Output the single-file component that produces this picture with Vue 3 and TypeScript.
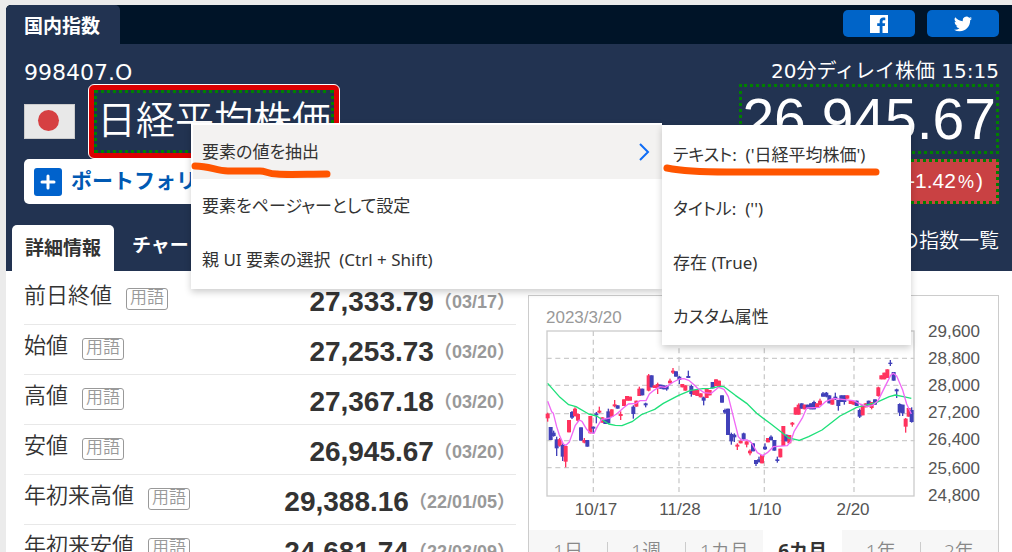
<script setup lang="ts">
interface Quote { label: string; value: string; date: string }
type Candle = [x: number, up: 0 | 1, top: number, bottom: number, high?: number, low?: number]

const quotes: Quote[] = [
  { label: '前日終値', value: '27,333.79', date: '03/17' },
  { label: '始値', value: '27,253.73', date: '03/20' },
  { label: '高値', value: '27,367.18', date: '03/20' },
  { label: '安値', value: '26,945.67', date: '03/20' },
  { label: '年初来高値', value: '29,388.16', date: '22/01/05' },
  { label: '年初来安値', value: '24,681.74', date: '22/03/09' },
]
const periods = ['1日', '1週', '1カ月', '6カ月', '1年', '2年']
const menuItems = ['要素の値を抽出', '要素をページャーとして設定', '親 UI 要素の選択  (Ctrl + Shift)']
const subItems = ["テキスト:  ('日経平均株価')", "タイトル:  ('')", '存在 (True)', 'カスタム属性']

const yLabels = [
  { text: '29,600', y: 41 }, { text: '28,800', y: 68 }, { text: '28,000', y: 95 },
  { text: '27,200', y: 122 }, { text: '26,400', y: 149 }, { text: '25,600', y: 178 }, { text: '24,800', y: 205 },
]
const xLabels = [
  { text: '10/17', x: 67 }, { text: '11/28', x: 151 }, { text: '1/10', x: 236 }, { text: '2/20', x: 324 },
]
const gridY = [235, 316, 401, 482, 563]
const gridX = [220, 477, 733, 1002]

const candles: Candle[] = [
  [83, 1, 401, 415, 398, 425], [92, 0, 441, 480], [101, 0, 458, 468, 452, 470], [110, 0, 478, 505, 470, 528],
  [119, 1, 478, 497, 474, 500], [128, 0, 495, 530, 490, 543], [137, 1, 498, 545, 498, 562], [147, 1, 420, 457],
  [156, 0, 396, 413, 393, 417], [165, 1, 386, 408, 382, 410], [174, 1, 402, 422, 400, 425], [183, 0, 442, 482],
  [193, 1, 480, 488, 474, 490], [202, 0, 480, 500], [211, 1, 408, 460], [220, 0, 440, 446, 440, 462],
  [229, 0, 400, 406, 396, 430], [238, 1, 392, 398, 380, 400], [247, 1, 412, 428], [256, 0, 418, 432],
  [265, 0, 394, 430, 386, 432], [275, 1, 388, 410], [284, 1, 373, 379, 360, 382], [293, 0, 376, 386],
  [302, 1, 402, 408, 394, 420], [312, 1, 358, 378], [321, 1, 348, 362], [330, 1, 350, 362],
  [340, 0, 380, 402, 376, 416], [349, 1, 362, 380], [358, 1, 326, 348, 320, 348], [367, 0, 326, 346],
  [377, 0, 370, 376, 368, 382], [386, 1, 286, 332, 282, 334], [395, 0, 286, 322], [404, 1, 316, 324],
  [413, 1, 312, 324, 308, 342], [422, 0, 314, 326], [431, 0, 316, 328], [440, 0, 318, 328, 316, 332],
  [450, 1, 302, 310, 296, 310], [459, 1, 272, 278, 264, 282], [468, 0, 274, 290], [478, 0, 290, 300, 288, 312],
  [487, 1, 312, 322], [496, 1, 316, 332], [505, 0, 288, 294, 272, 294], [514, 0, 318, 342, 314, 350],
  [523, 1, 330, 345], [532, 1, 330, 348], [542, 1, 340, 352], [551, 0, 352, 362, 350, 376],
  [560, 1, 326, 354], [569, 1, 330, 346], [578, 0, 306, 325], [588, 1, 298, 318], [597, 1, 302, 320],
  [606, 0, 346, 368], [615, 0, 390, 398, 386, 402], [624, 0, 386, 465], [634, 0, 462, 484, 458, 494],
  [643, 0, 464, 472, 460, 486], [652, 1, 494, 500, 490, 510], [662, 1, 482, 490], [671, 0, 460, 478, 458, 482],
  [680, 1, 484, 494, 484, 502], [690, 1, 512, 520, 508, 526], [699, 0, 490, 514], [708, 0, 540, 552, 540, 558],
  [717, 0, 538, 546, 530, 548], [726, 1, 525, 550], [735, 0, 500, 508, 490, 510], [744, 1, 474, 487],
  [753, 0, 470, 480, 466, 482], [763, 0, 480, 512], [772, 0, 538, 543, 530, 548], [781, 1, 506, 532],
  [790, 1, 438, 498], [799, 0, 464, 484], [808, 1, 465, 490], [817, 1, 428, 434, 426, 440],
  [827, 1, 382, 404], [836, 1, 374, 404, 370, 404], [845, 0, 370, 386], [854, 1, 374, 388], [863, 0, 374, 386],
  [873, 0, 370, 388], [882, 0, 366, 388, 362, 388], [891, 1, 370, 382], [900, 1, 362, 376, 356, 376],
  [909, 0, 340, 350, 336, 350], [919, 0, 338, 350, 336, 352], [928, 0, 346, 370], [937, 1, 358, 374],
  [946, 0, 350, 358, 338, 360], [955, 0, 360, 378, 360, 392], [964, 0, 346, 366], [973, 0, 346, 366, 346, 374],
  [982, 1, 346, 356], [992, 1, 360, 372], [1001, 1, 364, 374], [1010, 0, 362, 378], [1019, 0, 390, 410, 386, 414],
  [1028, 1, 376, 406], [1037, 1, 370, 382], [1046, 0, 362, 376], [1055, 1, 366, 384, 366, 388],
  [1065, 0, 358, 374], [1075, 1, 322, 348, 320, 350], [1084, 1, 286, 298], [1093, 1, 278, 298], [1102, 1, 268, 294],
  [1111, 0, 248, 252, 240, 258], [1121, 0, 276, 302], [1130, 0, 328, 334, 326, 354], [1139, 0, 372, 398, 370, 408],
  [1148, 0, 374, 400, 374, 408], [1157, 1, 416, 440, 414, 458], [1166, 1, 384, 410], [1175, 0, 390, 426, 382, 428],
]

const shortAverage = '83,364 95,395 100,400 110,440 118,465 130,492 138,496 148,486 158,458 166,436 178,420 186,424 200,448 210,458 222,460 232,440 245,418 270,414 290,402 310,384 325,372 348,370 360,362 378,362 388,342 400,332 420,320 436,322 460,306 478,297 492,296 508,302 522,314 532,324 552,338 574,340 596,322 612,328 625,350 640,410 655,470 664,480 682,480 694,488 712,518 728,527 742,518 760,500 802,497 812,485 822,455 848,412 860,384 898,382 918,364 940,355 1000,362 1020,372 1042,380 1058,376 1074,362 1098,314 1112,286 1120,280 1130,288 1148,330 1160,372 1174,402'
const longAverage = '83,310 120,352 146,374 168,380 206,402 230,408 266,432 286,436 306,437 338,424 366,403 384,396 404,388 430,370 476,346 512,331 548,326 570,325 600,319 612,320 646,346 680,370 710,400 750,430 776,450 806,474 838,481 866,470 906,450 960,408 1010,382 1068,368 1108,350 1126,345 1150,350 1174,355'
</script>

<template>
  <div class="page">
    <header>
      <div class="topbar">
        <a class="category" href="#">国内指数</a>
        <div class="social">
          <button type="button" aria-label="Facebook">
            <svg width="18" height="18" viewBox="0 0 18 18"><path fill="#fff" d="M0 0h18v18h-5.500v-7h2.300l.4-2.800h-2.700V6.600c0-.9.4-1.300 1.400-1.300h1.400V2.700c-.4-.1-1.100-.2-2-.2-2.200 0-3.600 1.300-3.600 3.600v2.100H7.200V11h2.500v7H0z" /></svg>
          </button>
          <button type="button" aria-label="Twitter">
            <svg width="18" height="16" viewBox="0 1.500 24 21"><path fill="#fff" d="M23.950 4.570a10 10 0 0 1-2.820.78 4.960 4.960 0 0 0 2.160-2.730c-.95.560-2 .970-3.120 1.190a4.920 4.920 0 0 0-8.390 4.480C7.690 8.100 4.070 6.130 1.640 3.160a4.920 4.920 0 0 0 1.520 6.570 4.900 4.900 0 0 1-2.230-.61v.06a4.920 4.920 0 0 0 3.950 4.830 5 5 0 0 1-2.210.08 4.940 4.940 0 0 0 4.600 3.420A9.870 9.870 0 0 1 0 19.540a14 14 0 0 0 7.550 2.210c9.050 0 14-7.500 14-13.980 0-.21 0-.42-.02-.63a9.940 9.940 0 0 0 2.460-2.550z" /></svg>
          </button>
        </div>
      </div>
      <div class="summary">
        <div class="identity">
          <p class="code">998407.O</p>
          <div class="name-row">
            <span class="flag"><i></i></span>
            <h1><span>日経平均株価</span></h1>
          </div>
          <button class="portfolio" type="button">
            <svg width="28" height="28" viewBox="0 0 28 28"><rect width="28" height="28" rx="3" fill="#0062cc" /><path d="M14 8v12M8 14h12" stroke="#fff" stroke-width="3" stroke-linecap="round" /></svg>
            <span>ポートフォリオに追加</span>
          </button>
          <nav class="tabs">
            <a class="active" href="#">詳細情報</a>
            <a href="#">チャート</a>
          </nav>
        </div>
        <div class="price-side">
          <p class="delay">20分ディレイ株価 15:15</p>
          <p class="price">26,945.67</p>
          <p class="change">-388.12 (-1.42<small>%</small>)</p>
          <a class="more" href="#">その他の指数一覧</a>
        </div>
      </div>
    </header>

    <main>
      <dl class="quotes">
        <div v-for="q in quotes" :key="q.label" class="quote">
          <dt>{{ q.label }}<a class="term" href="#">用語</a></dt>
          <dd>{{ q.value }}<span class="date">（{{ q.date }}）</span></dd>
        </div>
      </dl>
      <section class="panel">
        <svg class="chart" viewBox="0 0 469 234" role="img" aria-label="日経平均株価 6カ月">
          <text x="17" y="27" class="muted">2023/3/20</text>
          <g transform="translate(-9 -16) scale(.33333)">
            <g stroke="#ccc" stroke-width="4" stroke-dasharray="15 11">
              <line v-for="y in gridY" :key="'h' + y" x1="80" x2="1183" :y1="y" :y2="y" />
              <line v-for="x in gridX" :key="'v' + x" y1="153" y2="648" :x1="x" :x2="x" />
            </g>
            <rect x="81" y="153" width="1101" height="495" fill="none" stroke="#ccc" stroke-width="4" />
            <g v-for="c in candles" :key="c[0]" :fill="c[1] ? '#ff335f' : '#4141b9'">
              <rect :x="c[0] - 6" :y="c[2]" width="12" :height="c[3] - c[2]" />
              <rect :x="c[0] - 2" :y="c[4] ?? c[2]" width="4" :height="(c[5] ?? c[3]) - (c[4] ?? c[2])" />
            </g>
            <polyline :points="longAverage" fill="none" stroke="#1fe07a" stroke-width="4" stroke-linejoin="round" />
            <polyline :points="shortAverage" fill="none" stroke="#f069f5" stroke-width="4" stroke-linejoin="round" />
          </g>
          <text v-for="l in yLabels" :key="l.text" x="399" :y="l.y">{{ l.text }}</text>
          <text v-for="l in xLabels" :key="l.text" :x="l.x" y="219" text-anchor="middle">{{ l.text }}</text>
        </svg>
        <nav class="periods">
          <button v-for="(p, i) in periods" :key="p" type="button" :class="{ active: i === 3, divided: i !== 0 && i !== 3 && i !== 4 }">{{ p }}</button>
        </nav>
      </section>
    </main>

    <div class="menu" role="menu">
      <button v-for="(m, i) in menuItems" :key="m" type="button" role="menuitem" :class="{ hover: i === 0 }">
        {{ m }}
        <svg v-if="i === 0" width="12" height="18" viewBox="0 0 12 18"><path d="M2 1l8 8-8 8" fill="none" stroke="#0f6cf5" stroke-width="2" /></svg>
      </button>
      <svg class="mark first" width="146" height="22" viewBox="0 0 146 22"><path d="M7 6C22 6 28 11 40 11H72C78 11 80 14 89 14C100 15 120 14 139 14" /></svg>
      <div class="menu submenu" role="menu">
        <button v-for="s in subItems" :key="s" type="button" role="menuitem">{{ s }}</button>
        <svg class="mark second" width="222" height="16" viewBox="0 0 222 16"><path d="M5 5C25 9 45 9 65 9H214" /></svg>
      </div>
    </div>
  </div>
</template>

<style>
body { overflow: hidden; background: #ebebeb; }
</style>

<style scoped>
* { box-sizing: border-box; }
.page {
  position: relative;
  height: 100vh;
  padding: 5px 0 0 6px;
  overflow: hidden;
  font-family: "Noto Sans", "Noto Sans CJK JP", sans-serif;
  font-size: 20px;
  line-height: 24px;
  color: #333;
}
p, h1, dl, dd { margin: 0; }
a { color: inherit; text-decoration: none; }
button { padding: 0; border: 0; font: inherit; color: inherit; background: none; cursor: pointer; }
svg { display: block; }
header { background: #223351; color: #fff; border-radius: 5px 0 0 0; overflow: hidden; }
.topbar { display: flex; justify-content: space-between; background: #001428; height: 39px; }
.category { padding: 8px 20px 0 18px; background: #223351; border-radius: 5px 5px 0 0; font-weight: 700; font-family: "Noto Sans CJK JP", sans-serif; font-size: 19px; }
.social { display: flex; gap: 12px; padding: 5px 13px 7px 0; }
.social button { display: flex; align-items: center; justify-content: center; width: 72px; border-radius: 5px; background: #0064c8; }
.summary { display: flex; justify-content: space-between; }
.identity { padding: 18px 0 0 18px; }
.code { font-family: "DejaVu Sans", sans-serif; font-size: 22px; line-height: 22px; }
.name-row { display: flex; align-items: center; gap: 13px; }
.flag { display: flex; align-items: center; justify-content: center; width: 51px; height: 35px; background: #e8e8e8; border: 1px solid #ccc; }
.flag i { width: 21px; height: 21px; margin: 0 2px 2px 0; border-radius: 50%; background: #d64042; }
h1 { border: 1px solid #fff; border-radius: 6px; background: #dc0000; padding: 5px; font-weight: 350; font-size: 39px; line-height: 49px; font-family: "Noto Sans CJK JP", sans-serif; }
h1 span { display: block; padding-bottom: 8px; border: 3px dotted #008000; background: #223351; white-space: nowrap; }
.portfolio { display: flex; align-items: center; gap: 9px; height: 45px; padding: 0 12px 0 10px; border-radius: 5px; background: #fff; color: #0059b3; font-size: 21px; font-weight: 700; white-space: nowrap; }
.portfolio span { padding-bottom: 4px; }
.tabs { display: flex; margin: 21px 0 0 -12px; font-weight: 700; font-size: 19px; }
.tabs a { padding: 8px 18px 14px; }
.tabs .active { padding: 11px 13px; background: #fff; color: #333; border-radius: 5px 5px 0 0; }
.price-side { display: flex; flex-direction: column; align-items: flex-end; padding: 15px 13px 0 0; white-space: nowrap; }
.delay { font-family: "DejaVu Sans", "Noto Sans CJK JP", sans-serif; }
.price { margin-top: 1px; border: 3px dotted #008000; font-family: "Liberation Sans", sans-serif; font-size: 57px; line-height: 64px; }
.change { margin-top: 5px; padding: 0 13px; border: 3px dotted #008000; background: #c94143; font-family: "Liberation Sans", sans-serif; font-size: 21px; line-height: 38px; }
.change small { font-size: 18px; margin: 0 2px; }
.more { margin-top: 25px; font-weight: 350; }
main { display: flex; gap: 12px; padding: 4px 13px 0 18px; background: #fff; }
.quotes { flex: 492 1 0; }
.quote { display: flex; justify-content: space-between; height: 50px; padding-right: 1px; border-bottom: 1px solid #e8e8e8; font-family: "Liberation Sans", "Noto Sans CJK JP", sans-serif; }
dt { display: flex; align-items: flex-start; padding-top: 9px; font-size: 22px; font-weight: 350; white-space: nowrap; }
.term { margin: 4px 0 0 14px; padding: 0 3px; border: 1px solid #999; border-radius: 3px; color: #999; font-size: 17px; line-height: 17px; height: 22px; }
dd { padding-top: 11px; font-weight: 700; font-size: 28px; line-height: 32px; white-space: nowrap; }
.date { color: #999; font-size: 18px; line-height: 20px; vertical-align: 3px; }
.panel { flex: 469 1 0; margin-top: 20px; border: 1px solid #ccc; border-bottom: 0; }
.chart { width: 100%; font-family: "Liberation Sans", sans-serif; font-size: 17px; fill: #555; }
.muted { fill: #999; }
.periods { display: grid; grid-template-columns: repeat(6, 1fr); background: #f7f7f7; color: #888; font-size: 19px; font-weight: 350; }
.periods button { position: relative; height: 42px; }
.periods .divided::before { content: ""; position: absolute; left: 0; top: 12px; width: 1px; height: 20px; background: #ccc; }
.periods .active { background: #fff; color: #333; font-weight: 700; }
.menu { position: absolute; left: 191px; top: 123px; width: 471px; padding: 2px 0 2px 2px; background: #fff; color: #333; box-shadow: 0 3px 7px rgba(0, 0, 0, .2); font-size: 17px; font-feature-settings: "palt"; }
.menu button { display: flex; align-items: center; justify-content: space-between; width: 100%; height: 54px; padding: 0 12px 0 9px; text-align: left; white-space: pre; }
.menu .hover { background: #f3f2f1; }
.submenu { left: 471px; top: 2px; width: 249px; padding-top: 3px; padding-bottom: 1px; }
.mark { position: absolute; fill: none; stroke: #ff5500; stroke-width: 7px; stroke-linecap: round; stroke-linejoin: round; overflow: visible; }
.first { left: -3px; top: 37px; }
.second { left: 0; top: 38px; }
</style>
